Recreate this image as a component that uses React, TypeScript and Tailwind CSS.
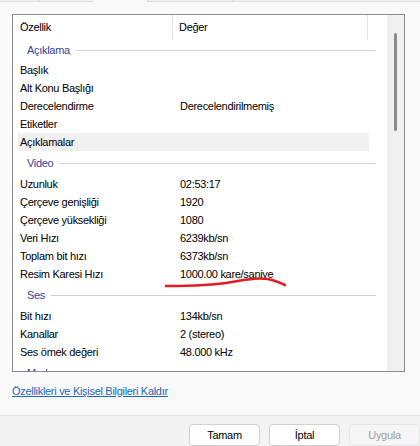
import React from 'react';

type Row = { label: string; value?: string; hover?: boolean };
type Group = { title: string; rows: Row[]; first?: boolean };

const groups: Group[] = [
  {
    title: 'Açıklama',
    first: true,
    rows: [
      { label: 'Başlık' },
      { label: 'Alt Konu Başlığı' },
      { label: 'Derecelendirme', value: 'Derecelendirilmemiş' },
      { label: 'Etiketler' },
      { label: 'Açıklamalar', hover: true },
    ],
  },
  {
    title: 'Video',
    rows: [
      { label: 'Uzunluk', value: '02:53:17' },
      { label: 'Çerçeve genişliği', value: '1920' },
      { label: 'Çerçeve yüksekliği', value: '1080' },
      { label: 'Veri Hızı', value: '6239kb/sn' },
      { label: 'Toplam bit hızı', value: '6373kb/sn' },
      { label: 'Resim Karesi Hızı', value: '1000.00 kare/saniye' },
    ],
  },
  {
    title: 'Ses',
    rows: [
      { label: 'Bit hızı', value: '134kb/sn' },
      { label: 'Kanallar', value: '2 (stereo)' },
      { label: 'Ses ömek değeri', value: '48.000 kHz' },
    ],
  },
  { title: 'Medya', rows: [] },
];

function GroupHeader({ title, first }: { title: string; first?: boolean }) {
  return (
    <div className={`flex items-center pl-[14px] pr-[11px] ${first ? 'h-[21px]' : 'h-[24px]'}`}>
      <span className="text-[#2f3f9f]">{title}</span>
      <div className="flex-1 h-px bg-[#cdd2e2] ml-[6px]" />
    </div>
  );
}

function PropRow({ row }: { row: Row }) {
  return (
    <div className={`flex items-center h-[18px] ml-[5px] w-[351px] ${row.hover ? 'bg-[#f0f0f0]' : ''}`}>
      <span className="w-[162px] pl-[2px] whitespace-nowrap">{row.label}</span>
      <span className="whitespace-nowrap">{row.value}</span>
    </div>
  );
}

export default function App() {
  return (
    <div
      className="relative w-[420px] h-[446px] bg-[#f9f9f9] overflow-hidden text-[11px] tracking-[-0.3px] text-black"
      style={{ fontFamily: '"Liberation Sans", Arial, sans-serif' }}
    >
      {/* tab strip remnants */}
      <div className="flex h-[2px]">
        <div className="w-[40px] bg-[#f0f0f0] border-b border-r border-[#dcdcdc]" />
        <div className="w-[53px] bg-[#f0f0f0] border-b border-[#dcdcdc]" />
        <div className="w-[54px]" />
        <div className="w-[86px] bg-[#f0f0f0] border-b border-l border-r border-[#dcdcdc]" />
        <div className="flex-1 bg-[#f0f0f0] border-b border-[#dcdcdc]" />
      </div>

      {/* property list */}
      <div className="mt-[12px] ml-[12px] w-[393px] h-[358px] border border-[#868b92] bg-white flex">
        <div className="w-[374px] overflow-hidden">
          <div className="flex h-[25px] items-center">
            <div className="w-[160px] h-full flex items-center pl-[7px] border-r border-[#e5e5e5]">Özellik</div>
            <div className="w-[195px] h-full flex items-center pl-[6px] border-r border-[#e5e5e5]">Değer</div>
          </div>
          {groups.map((g) => (
            <div key={g.title}>
              <GroupHeader title={g.title} first={g.first} />
              {g.rows.map((r) => (
                <PropRow key={r.label} row={r} />
              ))}
            </div>
          ))}
        </div>
        <div className="w-[17px] bg-[#f0f0f0] flex justify-center pt-[18px]">
          <div className="w-[3px] h-[98px] bg-[#8a8a8a] rounded-full" />
        </div>
      </div>

      {/* link */}
      <div className="mt-[11px] ml-[12px] h-[16px] flex items-center">
        <span className="text-[#1f66b8] underline">Özellikleri ve Kişisel Bilgileri Kaldır</span>
      </div>

      {/* bottom bar */}
      <div className="absolute left-0 right-0 top-[415px] bottom-0 bg-[#f3f3f3] border-t border-[#e5e5e5] flex gap-[9px] pl-[189px] pt-[8px]">
        <button className="w-[72px] h-[22px] bg-white border border-[#d0d0d0] rounded-[4px]">Tamam</button>
        <button className="w-[72px] h-[22px] bg-white border border-[#d0d0d0] rounded-[4px]">İptal</button>
        <button className="w-[72px] h-[22px] bg-[#f5f5f5] border border-[#e5e5e5] rounded-[4px] text-[#a0a0a0]">Uygula</button>
      </div>

      {/* hand-drawn red underline */}
      <svg className="absolute left-0 top-0 pointer-events-none" width="420" height="446">
        <path
          d="M166 286 C 190 286, 215 285, 232 282 S 262 277, 272 280 S 282 284, 285 285"
          fill="none"
          stroke="#e31b23"
          strokeWidth="2.5"
          strokeLinecap="round"
        />
      </svg>
    </div>
  );
}
